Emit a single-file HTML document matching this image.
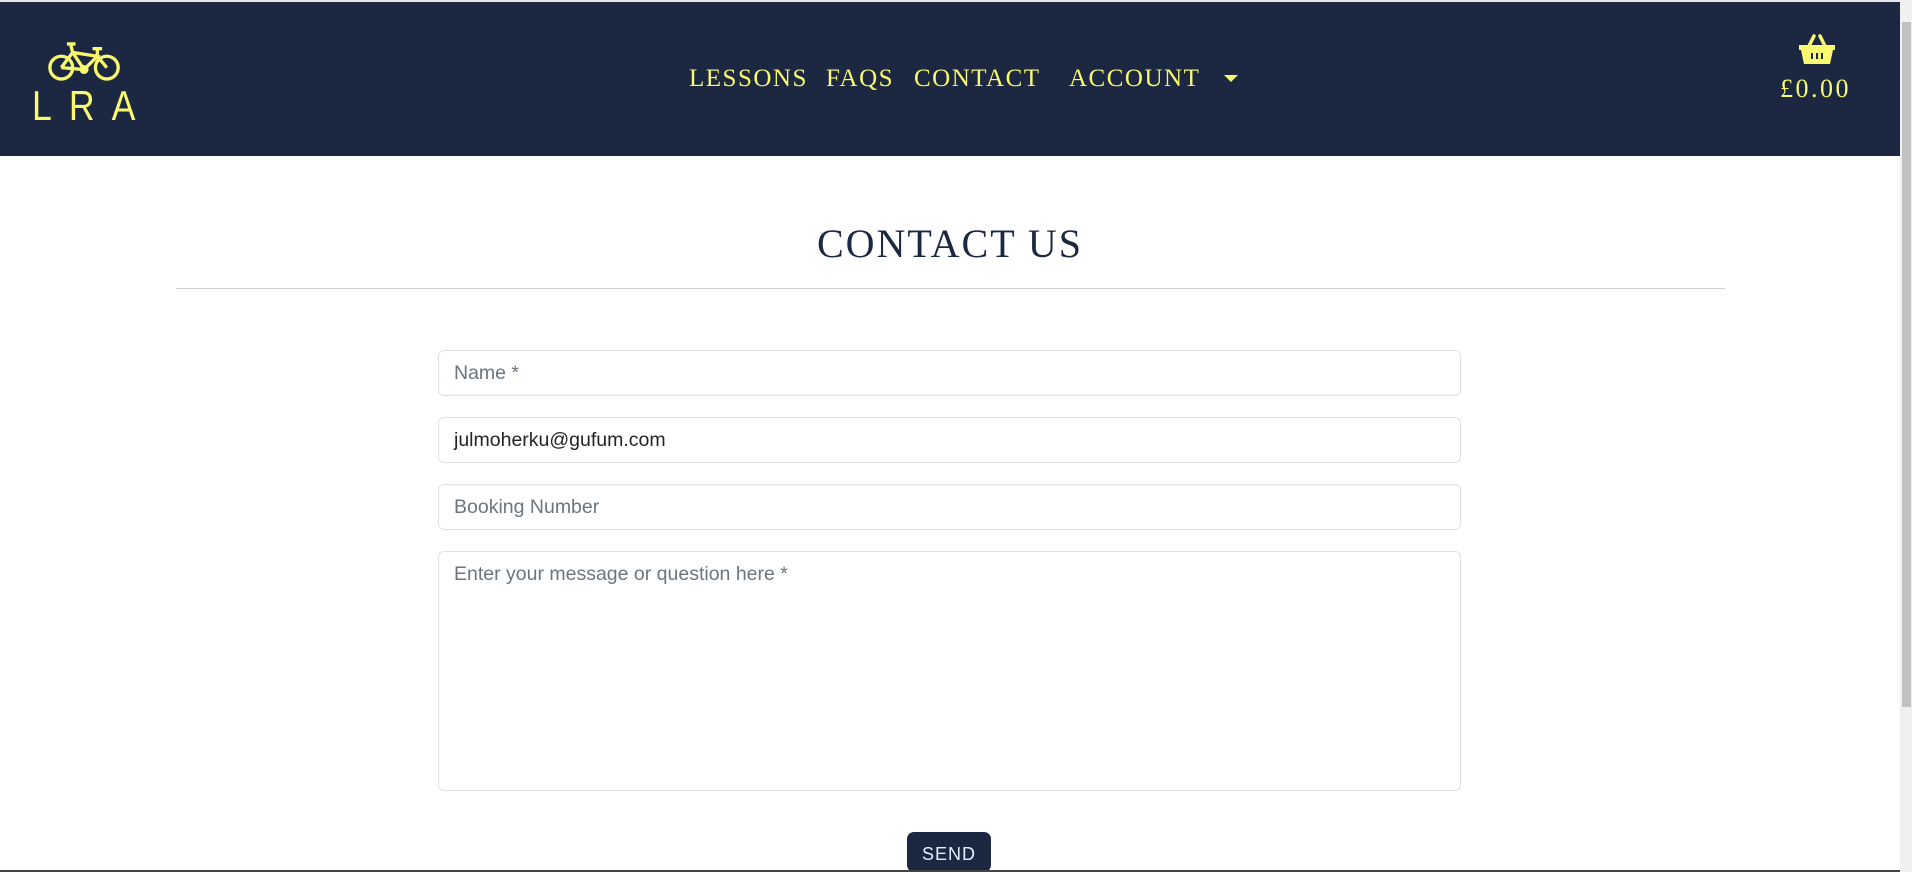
<!DOCTYPE html>
<html><head><meta charset="utf-8"><style>
*{box-sizing:border-box;margin:0;padding:0}
body{width:1912px;height:872px;overflow:hidden;background:#fff;position:relative;font-family:"Liberation Sans",sans-serif}
.top{position:absolute;left:0;top:0;width:1900px;height:2px;background:#e8e8e8}
header{position:absolute;left:0;top:2px;width:1900px;height:154px;background:#1c2841}
.sb{position:absolute;right:0;top:0;width:12px;height:872px;background:#f0f0f0}
.sb .th{position:absolute;left:2px;top:22px;width:9px;height:685px;background:#c1c1c1}
.nav{position:absolute;top:63px;font-family:"Liberation Serif",serif;font-size:25px;letter-spacing:1.5px;color:#fafa6e}
.lra{position:absolute;left:32px;top:80px;font-family:"Liberation Sans",sans-serif;font-size:42px;letter-spacing:20px;color:#fafa6e;transform:scaleX(.85);transform-origin:left}
h1{position:absolute;left:0;width:1900px;text-align:center;top:220px;font-family:"Liberation Serif",serif;font-weight:normal;font-size:40px;letter-spacing:2px;color:#1c2841}
.hr{position:absolute;left:176px;top:288px;width:1549px;height:1px;background:#d0d0d0}
.in{position:absolute;left:438px;width:1023px;height:46px;border:1px solid #dee2e6;border-radius:6px;font-size:19.5px;padding:11px 15px;color:#6c757d}
.bt{position:absolute;left:907px;top:832px;width:84px;height:40px;background:#1c2841;border-radius:7px;color:#e0f0ff;font-family:"Liberation Sans",sans-serif;font-size:18px;text-align:center;padding-top:12px;letter-spacing:1px}
.bot{position:absolute;left:0;top:870px;width:1900px;height:2px;background:#444}
</style></head><body>
<div class="top"></div>
<header>
<svg style="position:absolute;left:48px;top:36px" width="74" height="46" viewBox="0 0 78 46" fill="none" stroke="#fafa6e" stroke-width="3.5">
<circle cx="14" cy="30" r="12"/><circle cx="62" cy="30" r="12"/>
<path d="M14 30 L26 14 L52 18 L38 32 L14 30 M26 14 L38 32 M52 18 L62 30 M24 6 L26 14 M20 5 L29 5 M47 10 L57 10 M52 10 L52 18"/>
<circle cx="38" cy="32" r="3"/>
</svg>
<div class="lra">LRA</div>
<div class="nav" style="left:689px">LESSONS</div>
<div class="nav" style="left:826px">FAQS</div>
<div class="nav" style="left:914px">CONTACT</div>
<div class="nav" style="left:1069px">ACCOUNT</div>
<div style="position:absolute;left:1224px;top:73px;border-left:7px solid transparent;border-right:7px solid transparent;border-top:7px solid #fafa6e"></div>
<svg style="position:absolute;left:1799px;top:32px" width="36" height="32" viewBox="0 0 36 32">
<path d="M10 12 L15 2 M26 12 L21 2" stroke="#fafa6e" stroke-width="3.5" fill="none" stroke-linecap="round"/>
<path d="M0 11 H36 V16 H34 L31 30 H5 L2 16 H0Z" fill="#fafa6e"/>
<path d="M13 19 V25 M18 19 V25 M23 19 V25" stroke="#1c2841" stroke-width="2"/>
</svg>
<div style="position:absolute;left:1780px;top:72px;font-family:'Liberation Serif',serif;font-size:26px;letter-spacing:2.5px;color:#fafa6e">£0.00</div>
</header>
<div class="sb"><div class="th"></div></div>
<h1>CONTACT US</h1>
<div class="hr"></div>
<div class="in" style="top:350px">Name *</div>
<div class="in" style="top:417px;color:#212529">julmoherku@gufum.com</div>
<div class="in" style="top:484px">Booking Number</div>
<div class="in" style="top:551px;height:240px">Enter your message or question here *</div>
<div class="bt">SEND</div>
<div class="bot"></div>
</body></html>
